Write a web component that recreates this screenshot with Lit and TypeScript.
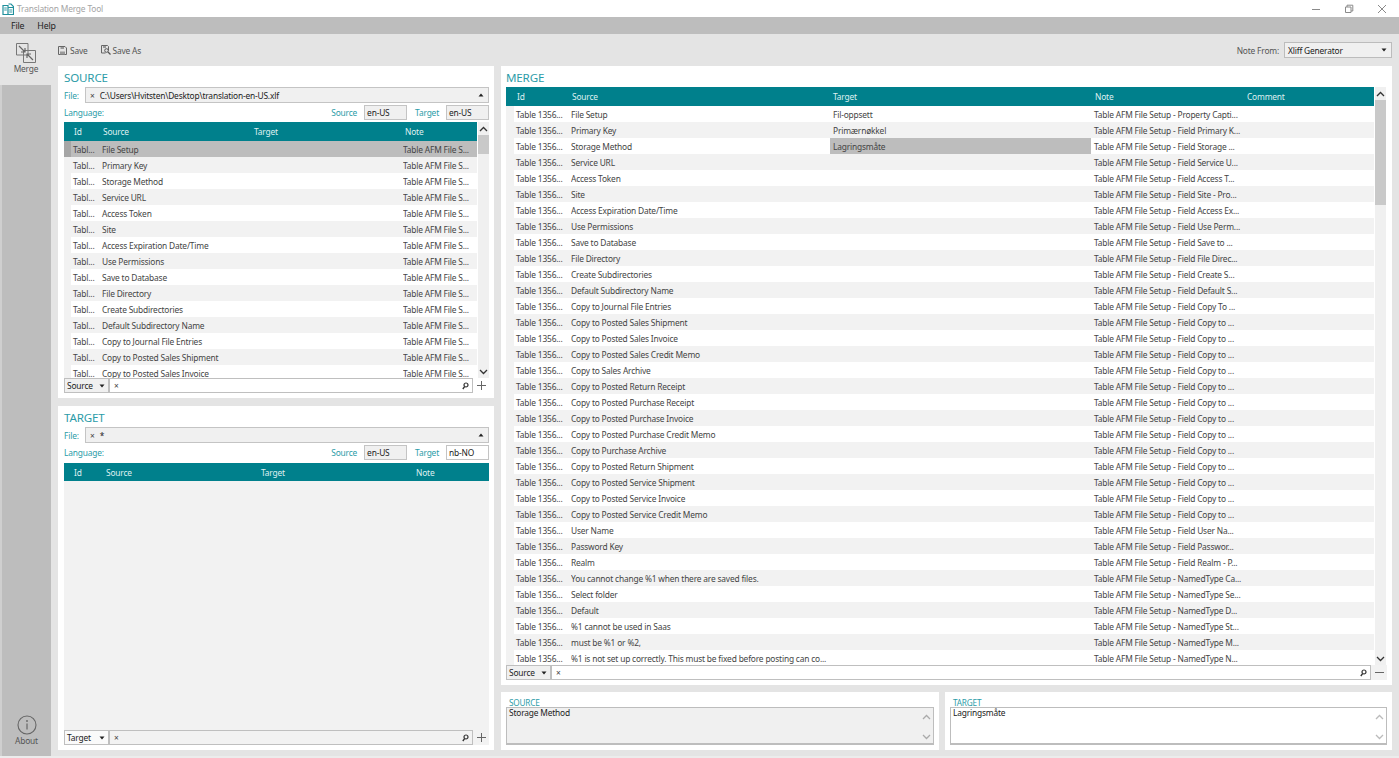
import { LitElement, html, css, svg } from "lit";
import { customElement } from "lit/decorators.js";

const T = "Table AFM File Setup - ";
const mergeRows: [string, string, string][] = [
  ["File Setup", "Fil-oppsett", "Property Capti..."],
  ["Primary Key", "Primærnøkkel", "Field Primary K..."],
  ["Storage Method", "Lagringsmåte", "Field Storage ..."],
  ["Service URL", "", "Field Service U..."],
  ["Access Token", "", "Field Access T..."],
  ["Site", "", "Field Site - Pro..."],
  ["Access Expiration Date/Time", "", "Field Access Ex..."],
  ["Use Permissions", "", "Field Use Perm..."],
  ["Save to Database", "", "Field Save to ..."],
  ["File Directory", "", "Field File Direc..."],
  ["Create Subdirectories", "", "Field Create S..."],
  ["Default Subdirectory Name", "", "Field Default S..."],
  ["Copy to Journal File Entries", "", "Field Copy To ..."],
  ["Copy to Posted Sales Shipment", "", "Field Copy to ..."],
  ["Copy to Posted Sales Invoice", "", "Field Copy to ..."],
  ["Copy to Posted Sales Credit Memo", "", "Field Copy to ..."],
  ["Copy to Sales Archive", "", "Field Copy to ..."],
  ["Copy to Posted Return Receipt", "", "Field Copy to ..."],
  ["Copy to Posted Purchase Receipt", "", "Field Copy to ..."],
  ["Copy to Posted Purchase Invoice", "", "Field Copy to ..."],
  ["Copy to Posted Purchase Credit Memo", "", "Field Copy to ..."],
  ["Copy to Purchase Archive", "", "Field Copy to ..."],
  ["Copy to Posted Return Shipment", "", "Field Copy to ..."],
  ["Copy to Posted Service Shipment", "", "Field Copy to ..."],
  ["Copy to Posted Service Invoice", "", "Field Copy to ..."],
  ["Copy to Posted Service Credit Memo", "", "Field Copy to ..."],
  ["User Name", "", "Field User Na..."],
  ["Password Key", "", "Field Passwor..."],
  ["Realm", "", "Field Realm - P..."],
  ["You cannot change %1 when there are saved files.", "", "NamedType Ca..."],
  ["Select folder", "", "NamedType Se..."],
  ["Default", "", "NamedType D..."],
  ["%1 cannot be used in Saas", "", "NamedType St..."],
  ["must be %1 or %2,", "", "NamedType M..."],
  ["%1 is not set up correctly. This must be fixed before posting can co...", "", "NamedType N..."],
];

const caret = svg`<svg class="caret" width="6" height="4" viewBox="0 0 6 4"><path d="M.5 3.5 3 .5l2.5 3z" fill="#222"/></svg>`;
const caretDown = svg`<svg class="caret" width="6" height="4" viewBox="0 0 6 4"><path d="M.5.5h5L3 3.5z" fill="#222"/></svg>`;
const chevUp = (c = "#333") => svg`<svg width="9" height="6" viewBox="0 0 9 6"><path d="M1 5l3.5-3.5L8 5" fill="none" stroke="${c}" stroke-width="1.3"/></svg>`;
const chevDown = (c = "#333") => svg`<svg width="9" height="6" viewBox="0 0 9 6"><path d="M1 1l3.5 3.5L8 1" fill="none" stroke="${c}" stroke-width="1.3"/></svg>`;
const lens = svg`<svg width="7" height="8" viewBox="0 0 7 8"><circle cx="4" cy="3" r="2" fill="none" stroke="#333" stroke-width="1.2"/><path d="M2.6 4.6.8 7" stroke="#333" stroke-width="1.4"/></svg>`;
const plus = svg`<svg width="9" height="9" viewBox="0 0 9 9"><path d="M4.5 0v9M0 4.5h9" stroke="#666" stroke-width="1"/></svg>`;
const minus = svg`<svg width="9" height="9" viewBox="0 0 9 9"><path d="M0 4.5h9" stroke="#666" stroke-width="1"/></svg>`;

@customElement("app-root")
export class AppRoot extends LitElement {
  static styles = css`
    :host {
      display: block;
      width: 1399px;
      height: 758px;
      overflow: hidden;
      font-family: "Noto Sans", "Open Sans", sans-serif;
      font-size: 8.4px;
      letter-spacing: -0.18px;
      color: #444;
      background: #e4e4e4;
    }
    * { box-sizing: border-box; }
    .title {
      height: 17px;
      background: #fff;
      display: flex;
      align-items: center;
      padding-left: 2px;
      color: #a4a4a4;
      font-size: 8.4px;
    }
    .title .name { margin-left: 3px; flex: 1; }
    .winctl { display: flex; width: 100px; }
    .winctl span { width: 33.4px; display: flex; justify-content: center; }
    .menu {
      height: 17px;
      background: #bdbdbd;
      display: flex;
      align-items: center;
      gap: 13px;
      padding-left: 11px;
      font-size: 8.8px;
      color: #222;
    }
    .main {
      height: 722px;
      display: grid;
      grid-template-columns: 51px 1fr;
    }
    .strip { height: 2px; background: #ececec; }
    .side {
      background: #bdbdbd;
      border-left: 2px solid #cfcfcf;
      display: flex;
      flex-direction: column;
      justify-content: space-between;
      align-items: center;
      color: #555;
    }
    .side-btn { display: flex; flex-direction: column; align-items: center; }
    .side-top {
      background: #e4e4e4;
      height: 51px;
      margin-left: -2px;
      width: 51px;
      padding: 9px 0 0 1px;
    }
    .side-bot { padding-bottom: 10px; }
    .content { display: flex; flex-direction: column; min-width: 0; }
    .toolbar {
      height: 32px;
      display: flex;
      align-items: center;
      padding: 0 7px;
      color: #555;
    }
    .tool { display: flex; align-items: center; gap: 3px; margin-right: 13px; }
    .tool.as { gap: 2px; }
    .spacer { flex: 1; }
    .notefrom { margin-right: 5px; }
    .nfcombo {
      width: 108px;
      height: 16px;
      border: 1px solid #bcbcbc;
      background: #f0f0f0;
      color: #222;
      display: flex;
      align-items: center;
      justify-content: space-between;
      padding: 0 4px 0 3px;
    }
    .panes {
      display: grid;
      grid-template-columns: 436px 891px;
      column-gap: 7px;
      padding-left: 7px;
    }
    .col { display: flex; flex-direction: column; }
    .card { background: #fff; padding: 0 5px 0 6px; }
    .src-card { height: 332px; margin-bottom: 8px; }
    .tgt-card { height: 344px; }
    .merge-card { height: 619px; margin-bottom: 7px; padding: 0 5px; }
    h2 {
      margin: 0;
      height: 21px;
      padding-top: 4px;
      font-weight: 400;
      font-size: 11.6px;
      line-height: 15px;
      color: #2c9ca8;
    }
    .fileline { display: flex; align-items: center; height: 16px; }
    .lbl { color: #2c9ca8; }
    .filelbl { width: 21px; }
    .filecombo {
      flex: 1;
      height: 16px;
      border: 1px solid #c4c4c4;
      background: #f0f0f0;
      display: flex;
      align-items: center;
      padding: 0 4px;
      color: #222;
    }
    .filecombo .x { margin-right: 5px; color: #444; }
    .filecombo .v { flex: 1; }
    .langline {
      display: flex;
      align-items: center;
      height: 17px;
      padding-top: 2px;
      margin-bottom: 2px;
    }
    .tgt-card .langline { margin-bottom: 3px; }
    .langline .lbl:first-child { flex: 1; }
    .langbox {
      width: 43px;
      height: 15px;
      border: 1px solid #c4c4c4;
      background: #f0f0f0;
      color: #222;
      display: flex;
      align-items: center;
      padding-left: 2px;
      margin-left: 7px;
    }
    .langbox.white { background: #fff; }
    .t2 { margin-left: 8px; }
    .tablewrap { display: grid; }
    .src-wrap { grid-template-columns: 413px 12px; }
    .mrg-wrap { grid-template-columns: 868px 12px; }
    .thead {
      background: #00808c;
      color: #dff0f1;
      height: 19px;
      display: grid;
      align-items: center;
    }
    .src-head { padding-left: 10px; grid-template-columns: 29px 151px 151px 82px; }
    .tgt-head { height: 18px; padding-left: 10px; grid-template-columns: 32px 155px 155px 84px; }
    .mrg-head { padding-left: 11px; grid-template-columns: 55px 261px 262px 152px 127px; }
    .tbody { overflow: hidden; background: #f2f2f2; }
    .src-body { height: 237px; }
    .mrg-body { height: 559px; }
    .row { display: grid; height: 16px; align-items: center; background: #fff; }
    .row:nth-child(even) { background: #f2f2f2; }
    .row.sel { background: #bdbdbd; }
    .row > span { white-space: nowrap; overflow: hidden; }
    .hdrcell { background: #f2f2f2; height: 16px; }
    .row.sel .hdrcell { background: #a6a6a6; }
    .src-row { grid-template-columns: 7px 30px 302px 74px; }
    .src-row .id { padding-left: 2px; }
    .src-row .s { padding-left: 1px; }
    .mrg-row { grid-template-columns: 8px 57px 260px 261px 282px; }
    .mrg-row .id { padding-left: 2px; }
    .cellsel { height: 16px; background: #bdbdbd; display: flex; align-items: center; margin-left: -1px; padding-left: 3px; margin-right: 1px; }
    .cell { padding-left: 2px; }
    .scroll {
      display: flex;
      flex-direction: column;
      background: #f0f0f0;
      margin-left: 1px;
      height: 100%;
    }
    .arrow { height: 13px; display: flex; align-items: center; justify-content: center; flex: none; }
    .track { flex: 1; }
    .thumb { background: #c9c9c9; }
    .src-thumb { height: 19px; }
    .mrg-thumb { height: 105px; }
    .filter { display: flex; height: 15px; }
    .fcombo {
      width: 46px;
      border: 1px solid #bfbfbf;
      border-width: 1px 2px 1px 1px;
      background: #f0f0f0;
      color: #222;
      display: flex;
      align-items: center;
      justify-content: space-between;
      padding: 0 3px 0 2px;
    }
    .finput {
      flex: 1;
      border: 1px solid #bfbfbf;
      border-left: 0;
      background: #fff;
      display: flex;
      align-items: center;
      justify-content: space-between;
      padding: 0 3px 0 4px;
    }
    .fbtn { width: 16px; display: flex; align-items: center; justify-content: center; background: #f2f2f2; }
    .white-btn { background: #fff; }
    .tgt-body { height: 249px; background: #f2f2f2; }
    .tgt-filter .fcombo { background: #fafafa; }
    .tgt-filter .finput { background: #f2f2f2; }
    .bottom {
      display: grid;
      grid-template-columns: 438px 447px;
      column-gap: 6px;
      height: 58px;
    }
    .note { background: #fff; padding: 6px 5px 0 5px; display: flex; flex-direction: column; }
    .note .cap { font-size: 8.2px; line-height: 9px; color: #2c9ca8; height: 9px; padding-left: 3px; }
    .area {
      height: 38px;
      border: 1px solid #bdbdbd;
      border-bottom-width: 2px;
      padding: 0 2px;
      color: #222;
      display: flex;
      justify-content: space-between;
      line-height: 10px;
    }
    .area.grey { background: #f0f0f0; }
    .ascroll { width: 12px; display: flex; flex-direction: column; justify-content: space-between; align-items: center; padding: 6px 0 3px; margin-right: -1px; }
  `;

  private scrollbar(thumb: string) {
    return html`<div class="scroll">
      <div class="arrow">${chevUp()}</div>
      <div class="thumb ${thumb}"></div>
      <div class="track"></div>
      <div class="arrow">${chevDown()}</div>
    </div>`;
  }

  private filter(name: string, cls: string, btn: unknown, whiteBtn = false) {
    return html`<div class="filter ${cls}">
      <div class="fcombo"><span>${name}</span>${caretDown}</div>
      <div class="finput"><span>×</span>${lens}</div>
      <div class="fbtn ${whiteBtn ? "white-btn" : ""}">${btn}</div>
    </div>`;
  }

  render() {
    return html`
      <div class="title">
        <svg width="12" height="12" viewBox="0 0 12 12"><path d="M1 2.5h5v9H1zM6 4.5h5.5v7H6zM6.5 1h2.5l2.5 2.5v1" fill="none" stroke="#1f8f9c" stroke-width="1.2"/><path d="M2.2 5h2.6M2.2 7h2.6M7.2 7h3M7.2 9h3" stroke="#1f8f9c" stroke-width=".9"/></svg>
        <span class="name">Translation Merge Tool</span>
        <div class="winctl">
          <span><svg width="10" height="10" viewBox="0 0 10 10"><path d="M1 5.5h8" stroke="#8a8a8a"/></svg></span>
          <span><svg width="10" height="10" viewBox="0 0 10 10"><path d="M1.5 3h5.5v5.5H1.5zM3 3V1.2h5.8V7H7" fill="none" stroke="#8a8a8a"/></svg></span>
          <span><svg width="10" height="10" viewBox="0 0 10 10"><path d="M1 1l8 8M9 1l-8 8" stroke="#8a8a8a"/></svg></span>
        </div>
      </div>
      <div class="menu"><span>File</span><span>Help</span></div>
      <div class="main">
        <div class="side">
          <div class="side-btn side-top">
            <svg width="20" height="20" viewBox="0 0 20 20"><path d="M.5.5h11.5v11.5H.5zM7.5 7.5h12v12h-12z" fill="none" stroke="#777"/><path d="M3 3l6 6M9 5v4H5M17 17l-6-6M11 15v-4h4" fill="none" stroke="#666" stroke-width="1.2"/></svg>
            <span>Merge</span>
          </div>
          <div class="side-btn side-bot">
            <svg width="20" height="20" viewBox="0 0 20 20"><circle cx="10" cy="10" r="9" fill="none" stroke="#666" stroke-width="1.1"/><path d="M10 8.5v6" stroke="#666" stroke-width="1.2"/><circle cx="10" cy="6" r=".9" fill="#666"/></svg>
            <span>About</span>
          </div>
        </div>
        <div class="content">
          <div class="toolbar">
            <div class="tool">
              <svg width="9" height="9" viewBox="0 0 9 9"><path d="M.5.5h6.5l1.5 1.5v6.5h-8z" fill="none" stroke="#666"/><path d="M2.5 1h3.5v2H2.5zM2 5.5h5v3H2z" fill="#999"/></svg>
              <span>Save</span>
            </div>
            <div class="tool as">
              <svg width="10" height="10" viewBox="0 0 10 10"><path d="M.5.5h6l1 1v4M.5.5v7.5h4" fill="none" stroke="#666"/><path d="M2 1h3v2H2z" fill="#999"/><circle cx="5.5" cy="5.5" r="1.8" fill="none" stroke="#555"/><path d="M7 7l2.5 2.5" stroke="#555" stroke-width="1.2"/></svg>
              <span>Save As</span>
            </div>
            <div class="spacer"></div>
            <span class="notefrom">Note From:</span>
            <div class="nfcombo"><span>Xliff Generator</span>${caretDown}</div>
          </div>
          <div class="panes">
            <div class="col">
              <section class="card src-card">
                <h2>SOURCE</h2>
                <div class="fileline"><span class="lbl filelbl">File:</span>
                  <div class="filecombo"><span class="x">×</span><span class="v">C:\\Users\\Hvitsten\\Desktop\\translation-en-US.xlf</span>${caret}</div></div>
                <div class="langline"><span class="lbl">Language:</span><span class="lbl">Source</span><div class="langbox">en-US</div><span class="lbl t2">Target</span><div class="langbox">en-US</div></div>
                <div class="tablewrap src-wrap">
                  <div>
                    <div class="thead src-head"><span>Id</span><span>Source</span><span>Target</span><span>Note</span></div>
                    <div class="tbody src-body">
                      ${mergeRows.slice(0, 15).map(
                        (r, i) => html`<div class="row src-row ${i === 0 ? "sel" : ""}"><span class="hdrcell"></span><span class="id">Tabl...</span><span class="s">${r[0]}</span><span>Table AFM File S...</span></div>`
                      )}
                    </div>
                  </div>
                  ${this.scrollbar("src-thumb")}
                </div>
                ${this.filter("Source", "", plus, true)}
              </section>
              <section class="card tgt-card">
                <h2>TARGET</h2>
                <div class="fileline"><span class="lbl filelbl">File:</span>
                  <div class="filecombo"><span class="x">×</span><span class="v">*</span>${caret}</div></div>
                <div class="langline"><span class="lbl">Language:</span><span class="lbl">Source</span><div class="langbox">en-US</div><span class="lbl t2">Target</span><div class="langbox white">nb-NO</div></div>
                <div class="thead tgt-head"><span>Id</span><span>Source</span><span>Target</span><span>Note</span></div>
                <div class="tgt-body"></div>
                ${this.filter("Target", "tgt-filter", plus)}
              </section>
            </div>
            <div class="col">
              <section class="card merge-card">
                <h2>MERGE</h2>
                <div class="tablewrap mrg-wrap">
                  <div>
                    <div class="thead mrg-head"><span>Id</span><span>Source</span><span>Target</span><span>Note</span><span>Comment</span></div>
                    <div class="tbody mrg-body">
                      ${mergeRows.map(
                        (r, i) => html`<div class="row mrg-row"><span class="hdrcell"></span><span class="id">Table 1356...</span><span class="s">${r[0]}</span>${
                          i === 2 ? html`<span class="cellsel">${r[1]}</span>` : html`<span class="cell">${r[1]}</span>`
                        }<span class="cell">${T + r[2]}</span></div>`
                      )}
                    </div>
                  </div>
                  ${this.scrollbar("mrg-thumb")}
                </div>
                ${this.filter("Source", "", minus)}
              </section>
              <div class="bottom">
                <section class="note"><div class="cap">SOURCE</div><div class="area grey"><span>Storage Method</span><div class="ascroll">${chevUp("#aaa")}${chevDown("#aaa")}</div></div></section>
                <section class="note"><div class="cap">TARGET</div><div class="area"><span>Lagringsmåte</span><div class="ascroll">${chevUp("#bbb")}${chevDown("#bbb")}</div></div></section>
              </div>
            </div>
          </div>
        </div>
      </div>
      <div class="strip"></div>
    `;
  }
}
